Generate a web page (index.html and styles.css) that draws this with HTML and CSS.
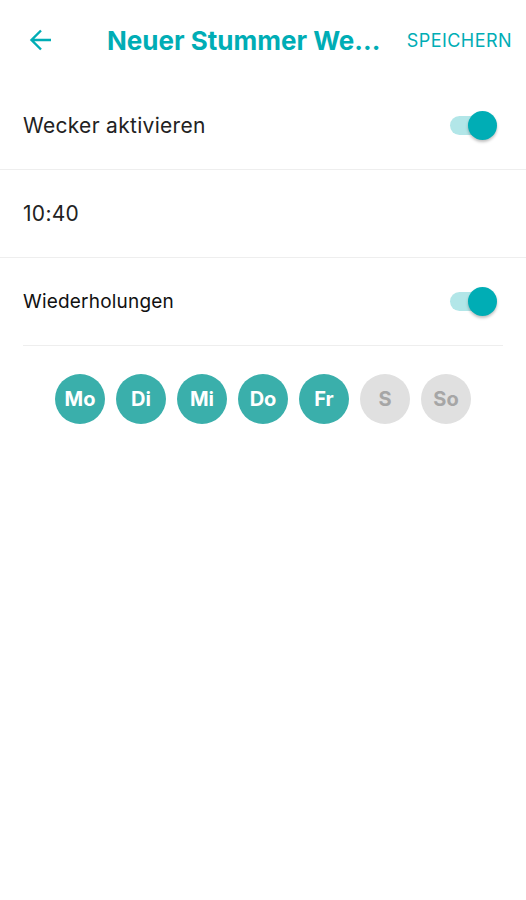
FILE: index.html
```html
<!DOCTYPE html>
<html lang="de">
<head>
    <meta charset="UTF-8">
    <meta name="viewport" content="width=device-width, initial-scale=1.0">
    <title>Neuer Stummer Wecker</title>
    <link rel="stylesheet" href="styles.css">
</head>
<body>

<div class="header">
    <button class="back" aria-label="Zurück">
        <svg width="24" height="24" viewBox="0 0 24 24">
            <path d="M22 12H3M12 2.5L2.5 12l9.5 9.5" fill="none" stroke="#00adb5" stroke-width="2.4"/>
        </svg>
    </button>
    <h1 class="title">Neuer Stummer We...</h1>
    <button class="save">SPEICHERN</button>
</div>

<div class="row">
    <span class="label">Wecker aktivieren</span>
    <div class="toggle on"><span class="knob"></span></div>
</div>

<div class="row">
    <span class="label">10:40</span>
</div>

<div class="row inset">
    <span class="label small">Wiederholungen</span>
    <div class="toggle on"><span class="knob"></span></div>
</div>

<div class="days">
    <span class="day active">Mo</span>
    <span class="day active">Di</span>
    <span class="day active">Mi</span>
    <span class="day active">Do</span>
    <span class="day active">Fr</span>
    <span class="day">S</span>
    <span class="day">So</span>
</div>

</body>
</html>
```

FILE: styles.css
```css
body {
    margin: 0;
    background-color: #fff;
    font-family: Inter, "Open Sans", Arial, sans-serif;
    color: #222;
}
.header {
    height: 80px;
    display: flex;
    align-items: center;
    margin-bottom: 2px;
}
.back {
    width: 24px;
    height: 24px;
    margin-left: 29px;
    padding: 0;
    border: none;
    background: none;
    display: flex;
}
.title {
    flex: 1;
    min-width: 0;
    margin: 0 0 0 54px;
    font-size: 26px;
    font-weight: 700;
    color: #00adb5;
    white-space: nowrap;
}
.save {
    margin-right: 14px;
    padding: 0;
    border: none;
    background: none;
    font-family: inherit;
    font-size: 18px;
    letter-spacing: 0.45px;
    color: #00adb5;
}
.row {
    height: 87px;
    display: flex;
    align-items: center;
    justify-content: space-between;
    padding: 0 29px 0 23px;
    border-bottom: 1px solid #eeeeee;
}
.row.inset {
    margin: 0 23px;
    padding: 0 6px 0 0;
}
.label {
    font-size: 21px;
    letter-spacing: 0.3px;
}
.label.small {
    font-size: 19px;
    letter-spacing: 0.2px;
    color: #111;
}
.toggle {
    position: relative;
    width: 40px;
    height: 19px;
    margin-right: 7px;
    border-radius: 10px;
    background-color: #b2e6e8;
}
.knob {
    position: absolute;
    top: -5px;
    right: -7px;
    width: 29px;
    height: 29px;
    border-radius: 50%;
    background-color: #00adb5;
    box-shadow: 0 2px 3px rgba(0, 0, 0, 0.25);
}
.days {
    display: flex;
    justify-content: center;
    gap: 11px;
    padding-top: 28px;
}
.day {
    width: 50px;
    height: 50px;
    border-radius: 50%;
    display: flex;
    align-items: center;
    justify-content: center;
    background-color: #e0e0e0;
    color: #a6a6a6;
    font-size: 20px;
    font-weight: 700;
}
.day.active {
    background-color: #3aafab;
    color: #fff;
}
```
